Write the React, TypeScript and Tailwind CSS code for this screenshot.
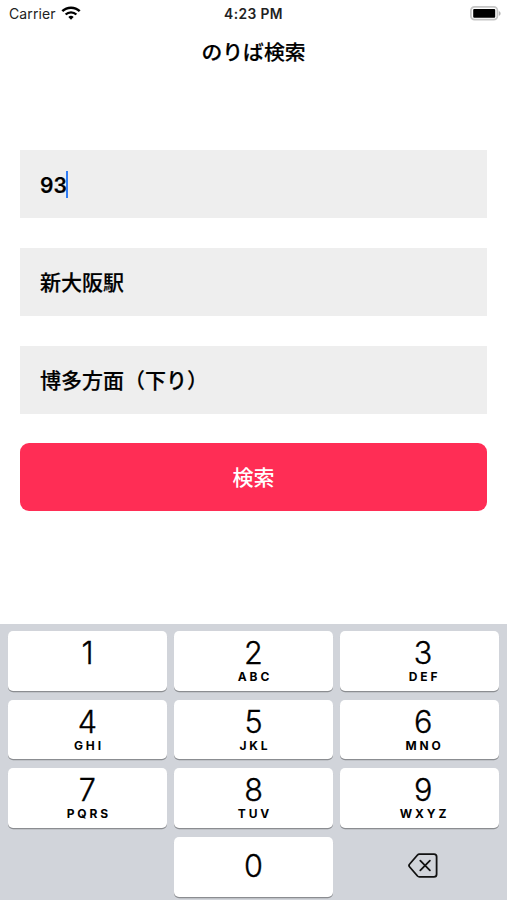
const keys = [
  ['1', ''],
  ['2', 'ABC'],
  ['3', 'DEF'],
  ['4', 'GHI'],
  ['5', 'JKL'],
  ['6', 'MNO'],
  ['7', 'PQRS'],
  ['8', 'TUV'],
  ['9', 'WXYZ'],
];

const keyClass =
  'flex h-[59.5px] flex-col items-center rounded-[5px] bg-white shadow-[0_1.3px_0_#8b8d91]';

const digitClass = 'text-[30.6px] font-light leading-[33px] [-webkit-text-stroke:0.35px_black]';

function StatusBar() {
  return (
    <header className="flex h-7 items-center justify-between pl-[9px] pr-[6px] text-[#222]">
      <div className="flex w-24 items-center gap-[5px]">
        <span className="text-[14px] leading-7 tracking-[0.1px]">Carrier</span>
        <svg className="mt-[-3px] h-[14px] w-[20px]" viewBox="0 0 20 14" fill="none" stroke="#000">
          <path d="M1.3 5.2a12.6 12.6 0 0 1 17.4 0" strokeWidth="2.5" />
          <path d="M4.6 8.5a7.8 7.8 0 0 1 10.8 0" strokeWidth="2.4" />
          <path d="M10 13.8 7.3 11a3.9 3.9 0 0 1 5.4 0Z" fill="#000" stroke="none" />
        </svg>
      </div>
      <span className="-ml-[3px] text-[13.8px] font-semibold leading-7 tracking-[0.4px]">4:23 PM</span>
      <div className="flex w-24 justify-end">
        <svg className="mt-[-2px] h-[15px] w-[31px]" viewBox="0 0 31 15">
          <rect x="0.9" y="0.9" width="26.5" height="12.8" rx="3.6" fill="#fff" stroke="#c5c5c5" strokeWidth="1.7" />
          <rect x="3.2" y="3" width="22" height="8.7" rx="1" fill="#000" />
          <path d="M28.8 5v4.8c2.4-.9 2.4-3.9 0-4.8Z" fill="#b5b5b5" />
        </svg>
      </div>
    </header>
  );
}

function Field({ value, active = false }: { value: string; active?: boolean }) {
  return (
    <div className="flex h-[68px] items-center bg-[#eeeeee] pl-[19.7px] text-[21px] text-black">
      <span
        className={
          active
            ? 'pt-[4px] font-semibold leading-[28px] [-webkit-text-stroke:0.2px_black]'
            : 'pt-[2px] font-medium leading-[28px] [-webkit-text-stroke:0.2px_black]'
        }
      >
        {value}
      </span>
      {active && <span className="-ml-px h-[27px] w-[2.5px] bg-[#2f7cf6]" />}
    </div>
  );
}

export default function App() {
  return (
    <main className="flex h-[900px] w-[507px] flex-col overflow-hidden bg-white font-['Inter','Noto_Sans_CJK_JP',sans-serif] text-black">
      <StatusBar />
      <h1 className="h-[122px] pt-[10px] text-center text-[20.8px] font-medium leading-[30px] [-webkit-text-stroke:0.2px_black]">
        のりば検索
      </h1>
      <form className="flex h-[474px] flex-col gap-[29.8px] px-[20.3px]">
        <Field value="93" active />
        <Field value="新大阪駅" />
        <Field value="博多方面（下り）" />
        <button
          type="button"
          className="h-[68px] rounded-[9px] bg-[#ff2d55] pt-[1px] text-[21px] font-medium text-white"
        >
          検索
        </button>
      </form>
      <section className="grid flex-1 grid-cols-3 content-start gap-x-[7.3px] gap-y-[9.1px] bg-[#d1d4da] px-[8px] pt-[7.3px]">
        {keys.map(([digit, letters], i) => (
          <button type="button" key={digit} className={i % 3 === 2 ? `${keyClass} pl-[7px]` : keyClass}>
            <span className={`mt-[5px] h-[34px] ${digitClass}`}>{digit}</span>
            <span className="pl-[3px] text-[12px] font-bold leading-[14px] tracking-[2.9px]">{letters}</span>
          </button>
        ))}
        <div />
        <button type="button" className={keyClass}>
          <span className={`mt-[12px] ${digitClass}`}>0</span>
        </button>
        <button type="button" className="flex h-[59.5px] items-center justify-center" aria-label="Delete">
          <svg
            className="mt-[-2px] ml-[7.5px] h-[25px] w-[30px]"
            viewBox="0 0 30 25"
            fill="none"
            stroke="#111"
            strokeWidth="1.8"
            strokeLinecap="round"
            strokeLinejoin="round"
          >
            <path d="M11.4 1.2H26a2.6 2.6 0 0 1 2.6 2.6v17.4a2.6 2.6 0 0 1-2.6 2.6H11.4a2.6 2.6 0 0 1-1.9-.8L1.7 14a2.2 2.2 0 0 1 0-3L9.5 2a2.6 2.6 0 0 1 1.9-.8Z" />
            <path d="m12.3 7.7 9.6 9.6M21.9 7.7l-9.6 9.6" />
          </svg>
        </button>
      </section>
    </main>
  );
}
